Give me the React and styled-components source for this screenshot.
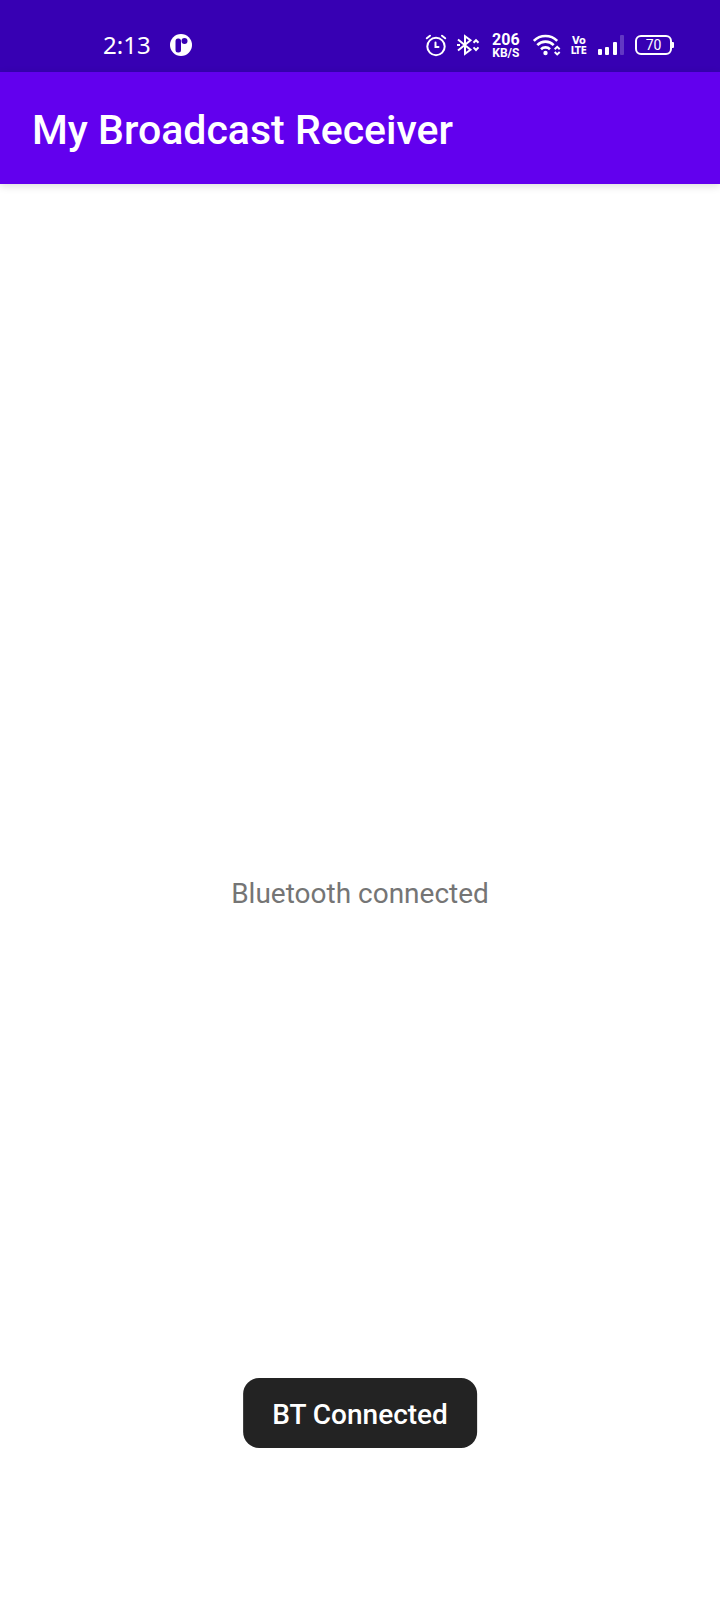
import React from "react";
import styled, { createGlobalStyle } from "styled-components";

const GlobalStyle = createGlobalStyle`
  *, *::before, *::after { box-sizing: border-box; }
  body {
    margin: 0;
    background: #fff;
    font-family: Roboto, "Noto Sans", sans-serif;
  }
`;

const Screen = styled.div`
  display: flex;
  flex-direction: column;
  min-height: 100vh;
`;

const StatusBar = styled.div`
  display: flex;
  align-items: center;
  justify-content: space-between;
  height: 72px;
  padding: 18px 48px 0 103px;
  background: #3700b3;
  color: #fff;
`;

const StatusGroup = styled.div`
  display: flex;
  align-items: center;
  gap: ${(p) => p.$gap};
`;

const Clock = styled.time`
  font-family: "Noto Sans", sans-serif;
  font-size: 24px;
  line-height: 24px;
`;

const Glyph = styled.svg`
  display: block;
  flex: none;
  overflow: visible;
`;

const Stack = styled.div`
  display: flex;
  flex-direction: column;
  align-items: center;
  padding: 0 ${(p) => p.$inset || "0"};
  font-family: ${(p) => p.$family};
  font-weight: 700;
`;

const StackLine = styled.span`
  font-size: ${(p) => p.$size};
  line-height: ${(p) => p.$line};
`;

const BatteryShell = styled.div`
  position: relative;
  width: 37px;
  height: 20px;
  border: 2px solid #fff;
  border-radius: 6px;
  font-size: 14px;
  line-height: 16px;
  text-align: center;

  &::after {
    content: "";
    position: absolute;
    top: 5px;
    right: -4px;
    width: 2px;
    height: 6px;
    background: #fff;
    border-radius: 0 1px 1px 0;
  }
`;

const AppBar = styled.header`
  display: flex;
  align-items: center;
  height: 112px;
  padding: 4px 32px 0;
  background: #6200ee;
  color: #fff;
  box-shadow: 0 2px 8px rgba(0, 0, 0, 0.14);
`;

const Title = styled.h1`
  margin: 0;
  font-size: 41px;
  font-weight: 500;
  line-height: 48px;
`;

const Content = styled.main`
  display: flex;
  flex: 1;
  align-items: center;
  justify-content: center;
  padding-top: 4px;
`;

const Message = styled.p`
  margin: 0;
  color: #757575;
  font-size: 28px;
  line-height: 36px;
`;

const Toast = styled.div`
  position: fixed;
  bottom: 152px;
  left: 50%;
  transform: translateX(-50%);
  padding: 19px 29px 15px;
  border-radius: 16px;
  background: #232323;
  color: #fff;
  font-size: 28px;
  font-weight: 500;
  line-height: 36px;
  white-space: nowrap;
`;

function AppBadge() {
  return (
    <Glyph width="22" height="22" viewBox="0 0 22 22">
      <circle cx="11" cy="11" r="11" fill="#fff" />
      <rect x="5.5" y="4.5" width="5.5" height="14" rx="2.5" fill="#3700b3" />
      <circle cx="14.5" cy="7" r="3" fill="#3700b3" />
    </Glyph>
  );
}

function AlarmIcon() {
  return (
    <Glyph width="20" height="20" viewBox="0 0 20 20" fill="none" stroke="#fff" strokeWidth="2" strokeLinecap="round">
      <circle cx="10" cy="11.5" r="8.7" />
      <path d="M9.5 7.5v4.5h3M0.8 3.3l3.2-2.6M19.2 3.3l-3.2-2.6" />
    </Glyph>
  );
}

function BluetoothIcon() {
  return (
    <Glyph width="22" height="20" viewBox="0 0 22 20" fill="none" stroke="#fff" strokeWidth="2">
      <path d="M1 4.6l12.5 10.2L8 18.8V1.2l5.5 4L1 15.4M0 10h3" />
      <path d="M16.5 7.8l2.5-2.6 2.5 2.6M16.5 12.4l2.5 2.6 2.5-2.6" />
    </Glyph>
  );
}

function WifiIcon() {
  return (
    <Glyph width="27" height="20" viewBox="0 0 27 20" fill="none" stroke="#fff" strokeWidth="2.6">
      <path d="M0.8 5.8a16.5 16.5 0 0 1 23.4 0M4.3 10.1a11.5 11.5 0 0 1 16.4 0M8 14.2a6.5 6.5 0 0 1 9 0" />
      <circle cx="12.5" cy="18" r="2.2" fill="#fff" stroke="none" />
      <path d="M21.7 14.2l2.5-2.4 2.5 2.4M21.7 17l2.5 2.4 2.5-2.4" strokeWidth="2" />
    </Glyph>
  );
}

function SignalIcon() {
  return (
    <Glyph width="26" height="20" viewBox="0 0 26 20" fill="#fff">
      <rect x="0" y="14" width="4" height="6" rx="1" />
      <rect x="7" y="12" width="4" height="8" rx="1" />
      <rect x="15" y="7" width="4" height="13" rx="1" />
      <rect x="22" y="0" width="4" height="20" rx="1" opacity="0.22" />
    </Glyph>
  );
}

export default function App() {
  return (
    <Screen>
      <GlobalStyle />
      <StatusBar>
        <StatusGroup $gap="19px">
          <Clock>2:13</Clock>
          <AppBadge />
        </StatusGroup>
        <StatusGroup $gap="11px">
          <AlarmIcon />
          <BluetoothIcon />
          <Stack $family="Roboto, sans-serif" $inset="2px">
            <StackLine $size="16px" $line="15px">206</StackLine>
            <StackLine $size="12px" $line="12px">KB/S</StackLine>
          </Stack>
          <WifiIcon />
          <Stack $family='"Liberation Sans Narrow", "DejaVu Sans Condensed", sans-serif'>
            <StackLine $size="11px" $line="11px">Vo</StackLine>
            <StackLine $size="10px" $line="10px">LTE</StackLine>
          </Stack>
          <SignalIcon />
          <BatteryShell>70</BatteryShell>
        </StatusGroup>
      </StatusBar>
      <AppBar>
        <Title>My Broadcast Receiver</Title>
      </AppBar>
      <Content>
        <Message>Bluetooth connected</Message>
      </Content>
      <Toast role="status">BT Connected</Toast>
    </Screen>
  );
}
